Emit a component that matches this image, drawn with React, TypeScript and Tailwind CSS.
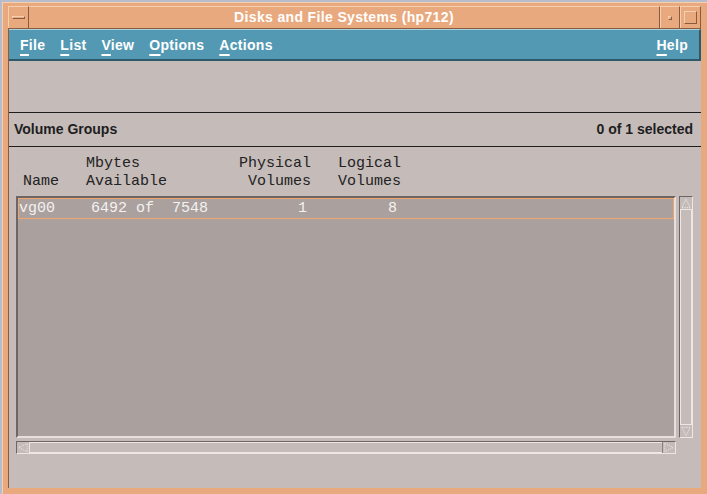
import React from "react";

const sans = { fontFamily: '"Liberation Sans", Arial, sans-serif' };
const mono = { fontFamily: '"Liberation Mono", "Courier New", monospace' };

function line(parts: [string, number][]): string {
  let s = "";
  for (const [text, col] of parts) {
    while (s.length < col) s += " ";
    s += text;
  }
  return s;
}

function Arrow({ dir }: { dir: "up" | "down" | "left" | "right" }) {
  const pts: Record<string, string> = {
    up: "6.5,2 11,11 2,11",
    down: "2,2 11,2 6.5,11",
    left: "2,6.5 11,2 11,11",
    right: "2,2 11,6.5 2,11",
  };
  return (
    <svg width="13" height="13" viewBox="0 0 13 13" className="block">
      <polygon points={pts[dir]} fill="#c4bab8" stroke="#ece6e4" strokeWidth="1" strokeDasharray="1.5 1" />
    </svg>
  );
}

function MenuItem({ first, rest }: { first: string; rest: string }) {
  return (
    <span className="text-[14px] font-bold text-white leading-none tracking-[0.3px]">
      <span className="underline decoration-[1.5px] underline-offset-[4px]">{first}</span>
      {rest}
    </span>
  );
}

export default function App() {
  const header1 = line([["Mbytes", 7], ["Physical", 24], ["Logical", 35]]);
  const header2 = line([["Name", 0], ["Available", 7], ["Volumes", 25], ["Volumes", 35]]);
  const row = line([["vg00", 0], ["6492", 8], ["of", 13], ["7548", 17], ["1", 31], ["8", 41]]);
  return (
    <div className="w-[707px] h-[494px] bg-[#b7bccd] overflow-hidden" style={sans}>
      <div className="ml-[2px] mt-[2px] w-[705px] h-[492px] bg-[#e9a97e] flex flex-col pl-[5px] pr-[6px] pb-[6px] border-t border-l border-[#f6cfae]">
        {/* Title bar */}
        <div className="h-[26px] flex items-stretch pt-[3px] border-b border-[#8c5a3c]">
          <div className="w-[21px] flex items-center justify-center border-t border-l border-[#f6cfae] border-r border-r-[#8c5a3c]">
            <div className="w-[13px] h-[3px] border-t border-l border-[#f6cfae] border-b border-r border-b-[#8c5a3c] border-r-[#8c5a3c]" />
          </div>
          <div className="flex-1 flex items-center justify-center text-white font-bold text-[14px] tracking-[0.35px] border-t border-[#f6cfae] border-r border-r-[#8c5a3c]">
            Disks and File Systems (hp712)
          </div>
          <div className="w-[20px] flex items-center justify-center border-t border-l border-[#f6cfae] border-r border-r-[#8c5a3c]">
            <div className="w-[4px] h-[4px] border-t border-l border-[#f6cfae] border-b border-r border-b-[#8c5a3c] border-r-[#8c5a3c]" />
          </div>
          <div className="w-[21px] flex items-center justify-center border-t border-l border-[#f6cfae] border-r border-r-[#8c5a3c]">
            <div className="w-[13px] h-[13px] border-t border-l border-[#f6cfae] border-b border-r border-b-[#8c5a3c] border-r-[#8c5a3c]" />
          </div>
        </div>
        {/* Content */}
        <div className="flex-1 flex flex-col bg-[#c5bbb9] border-l border-[#8c5a3c]">
          {/* Menubar */}
          <div className="h-[32px] bg-[#5399b3] border-t border-[#a8d4e2] border-b-2 border-b-[#2c5a6b] border-r-2 border-r-[#2c5a6b] flex items-center pl-[11px] pr-[11px] gap-[15px]">
            <MenuItem first="F" rest="ile" />
            <MenuItem first="L" rest="ist" />
            <MenuItem first="V" rest="iew" />
            <MenuItem first="O" rest="ptions" />
            <MenuItem first="A" rest="ctions" />
            <div className="flex-1" />
            <MenuItem first="H" rest="elp" />
          </div>
          <div className="h-[51px]" />
          <div className="h-px bg-[#1e1e1e]" />
          <div className="h-[33px] flex items-center justify-between pl-[5px] pr-[8px] text-[14px] font-bold text-[#1e1e1e]">
            <span>Volume Groups</span>
            <span>0 of 1 selected</span>
          </div>
          <div className="h-px bg-[#1e1e1e]" />
          <pre className="mt-[8px] pl-[14px] text-[15px] leading-[18px] text-[#222]" style={mono}>
            {header1 + "\n" + header2}
          </pre>
          {/* List + scrollbars */}
          <div className="mt-[5px] pl-[7px] flex gap-[3px]">
            <div className="w-[660px] h-[242px] bg-[#aaa09e] border-t-2 border-l-2 border-[#6e6664] border-b-2 border-r-2 border-b-[#e6dfdd] border-r-[#e6dfdd]">
              <div className="h-[21px] border border-[#f0a46e] flex items-center pl-[0px]">
                <pre className="text-[15px] leading-none text-[#f4f2f0]" style={mono}>{row}</pre>
              </div>
            </div>
            <div className="w-[14px] h-[242px] flex flex-col border-t border-l border-[#6e6664] border-b border-r border-b-[#ece6e4] border-r-[#ece6e4]">
              <div className="h-[13px] flex items-center justify-center border-b border-[#ece6e4]"><Arrow dir="up" /></div>
              <div className="flex-1 border-l border-r border-[#ece6e4]" />
              <div className="h-[13px] flex items-center justify-center border-t border-[#ece6e4]"><Arrow dir="down" /></div>
            </div>
          </div>
          <div className="mt-[3px] pl-[7px] flex">
            <div className="w-[660px] h-[13px] flex border-t border-l border-[#6e6664] border-b border-r border-b-[#ece6e4] border-r-[#ece6e4]">
              <div className="w-[13px] flex items-center justify-center border-r border-[#ece6e4]"><Arrow dir="left" /></div>
              <div className="flex-1 border-t border-b border-[#ece6e4]" />
              <div className="w-[13px] flex items-center justify-center border-l border-[#8a8280]"><Arrow dir="right" /></div>
            </div>
          </div>
          <div className="flex-1" />
        </div>
      </div>
    </div>
  );
}
